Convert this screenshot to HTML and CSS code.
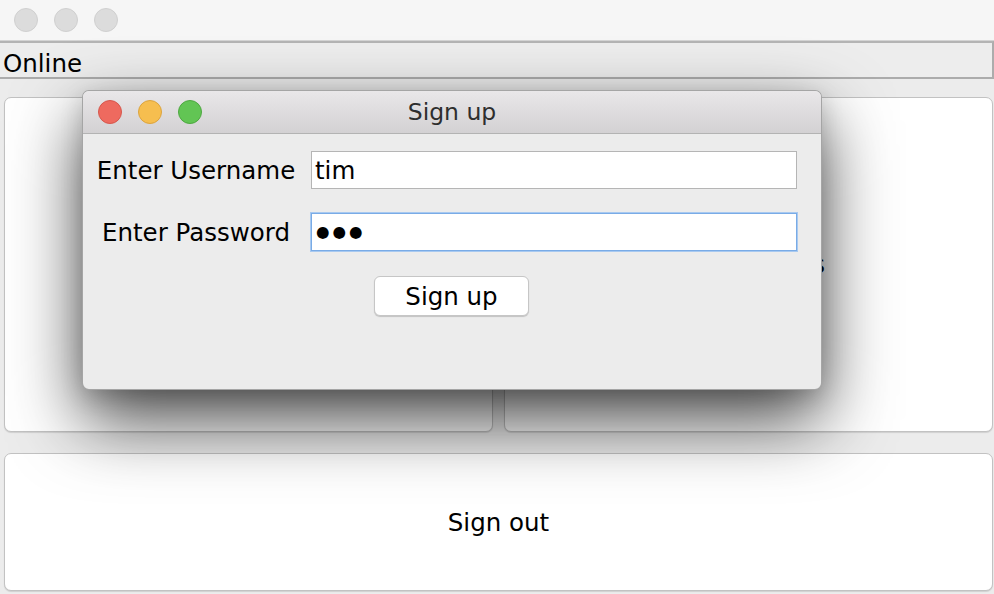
FILE: index.html
```html
<!DOCTYPE html>
<html>
<head>
<meta charset="utf-8">
<link rel="stylesheet" href="styles.css">
</head>
<body>
<div class="window">
  <div class="titlebar">
    <span class="light"></span>
    <span class="light"></span>
    <span class="light"></span>
  </div>
  <div class="status">Online</div>
  <div class="content">
    <div class="top-row">
      <div class="card">Sign up</div>
      <div class="card">Online users</div>
    </div>
    <div class="card wide">Sign out</div>
  </div>

  <div class="dialog">
    <div class="dlg-title">
      <div class="lights">
        <span class="dot red"></span>
        <span class="dot yellow"></span>
        <span class="dot green"></span>
      </div>
      <div class="dlg-name">Sign up</div>
    </div>
    <div class="dlg-body">
      <div class="form">
        <div class="label">Enter Username</div>
        <div class="field">tim</div>
        <div class="label">Enter Password</div>
        <div class="field focused"><span class="pw">●●●</span></div>
      </div>
      <div class="actions">
        <div class="button">Sign up</div>
      </div>
    </div>
  </div>
</div>
</body>
</html>
```

FILE: styles.css
```css
html, body {
  margin: 0;
  padding: 0;
}
body {
  width: 994px;
  height: 594px;
  overflow: hidden;
  background: #ececec;
  font-family: "DejaVu Sans", "Liberation Sans", sans-serif;
  font-size: 24.5px;
  color: #000;
}
.window {
  position: relative;
  width: 994px;
  height: 594px;
  display: flex;
  flex-direction: column;
}
.titlebar {
  height: 40px;
  background: #f6f6f6;
  border-bottom: 1px solid #d4d4d4;
  display: flex;
  align-items: center;
  gap: 16px;
  padding-left: 14px;
  box-sizing: content-box;
}
.light {
  width: 22px;
  height: 22px;
  border-radius: 50%;
  background: #dcdcdc;
  border: 1px solid #d0d0d0;
}
.status {
  height: 27px;
  padding-top: 7px;
  border-top: 2px solid #b4b4b4;
  border-bottom: 2px solid #acacac;
  border-right: 2px solid #acacac;
  background: #ededed;
  padding-left: 3px;
  line-height: 27px;
}
.content {
  flex: 1;
  padding: 18px 1px 3px 4px;
  display: flex;
  flex-direction: column;
  gap: 21px;
}
.top-row {
  height: 335px;
  display: grid;
  grid-template-columns: 489px 489px;
  gap: 11px;
}
.card {
  background: #fff;
  border: 1px solid #c2c2c2;
  border-radius: 7px;
  box-shadow: 0 1px 1px rgba(0,0,0,0.12);
  display: flex;
  align-items: center;
  justify-content: center;
  box-sizing: border-box;
}
.card.wide {
  height: 138px;
}

/* dialog */
.dialog {
  position: absolute;
  left: 82px;
  top: 90px;
  width: 740px;
  height: 300px;
  box-sizing: border-box;
  border: 1px solid rgba(0,0,0,0.3);
  border-radius: 7px;
  background: #ececec;
  box-shadow: 0 30px 70px rgba(0,0,0,0.72), 0 6px 22px rgba(0,0,0,0.15);
  overflow: hidden;
  display: flex;
  flex-direction: column;
}
.dlg-title {
  height: 42px;
  background: linear-gradient(#e9e7e9, #d3d1d3);
  border-bottom: 1px solid #b3b3b3;
  display: flex;
  align-items: center;
  position: relative;
}
.lights {
  display: flex;
  gap: 16px;
  padding-left: 15px;
}
.dot {
  width: 22px;
  height: 22px;
  border-radius: 50%;
  border: 1px solid;
}
.red { background: #ee6a5f; border-color: #d6574d; }
.yellow { background: #f6be4f; border-color: #dca43e; }
.green { background: #62c554; border-color: #4ea841; }
.dlg-name {
  position: absolute;
  left: 0;
  right: 0;
  text-align: center;
  color: #2e2e2e;
  font-size: 23.5px;
  pointer-events: none;
}
.dlg-body {
  padding: 17px 0 0 7px;
  display: flex;
  flex-direction: column;
}
.form {
  display: grid;
  grid-template-columns: 212px 486px;
  column-gap: 9px;
  row-gap: 24px;
  align-items: center;
}
.label {
  justify-self: center;
}
.field {
  height: 38px;
  box-sizing: border-box;
  background: #fff;
  border: 1px solid #b5b5b5;
  padding-left: 3px;
  display: flex;
  align-items: center;
}
.field.focused {
  border-color: #79abe6;
  box-shadow: 0 0 0 1px #a8c9f0;
}
.pw {
  font-size: 15.5px;
  letter-spacing: 3px;
  padding-left: 1px;
}
.actions {
  display: flex;
  justify-content: center;
  padding-top: 25px;
  padding-right: 8px;
}
.button {
  width: 155px;
  height: 40px;
  box-sizing: border-box;
  background: #fff;
  border: 1px solid #c6c6c6;
  border-radius: 6px;
  box-shadow: 0 1px 1px rgba(0,0,0,0.18);
  display: flex;
  align-items: center;
  justify-content: center;
}
```
